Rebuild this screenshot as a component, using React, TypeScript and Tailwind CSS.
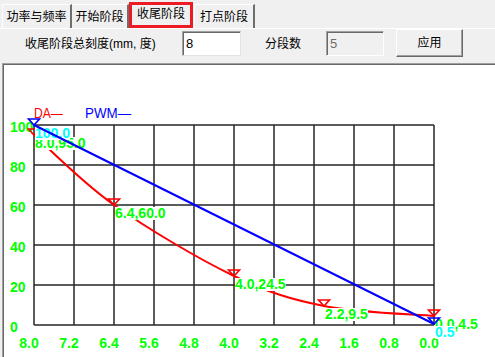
import React from "react";

const xs = [34, 74, 114, 154, 194, 234, 274, 314, 354, 394, 434];
const ys = [125, 165, 205, 245, 285, 325];
const xLabels = ["8.0", "7.2", "6.4", "5.6", "4.8", "4.0", "3.2", "2.4", "1.6", "0.8", "0.0"];
const yLabels = ["100", "80", "60", "40", "20", "0"];

const daPoints = [
  { x: 34, y: 135, t: "8.0,95.0" },
  { x: 114, y: 205, t: "6.4,60.0" },
  { x: 234, y: 276, t: "4.0,24.5" },
  { x: 324, y: 306, t: "2.2,9.5" },
  { x: 434, y: 316, t: "0.0,4.5" },
];
const pwmPoints = [
  { x: 34, y: 125, t: "100.0" },
  { x: 434, y: 324, t: "0.5" },
];

// rough width of bold 14px arial digits
function textW(s: string) {
  let w = 0;
  for (const c of s) w += c === "." || c === "," ? 3.9 : 7.8;
  return w;
}

function Tab({ label, className }: { label: string; className: string }) {
  return (
    <div className={"flex items-center justify-center text-[12px] leading-none text-black " + className}>
      {label}
    </div>
  );
}

function Chart() {
  const font = { fontFamily: "'Liberation Sans', Arial, sans-serif" };
  return (
    <svg width="492" height="293" viewBox="3 64 492 293" className="block" style={font}>
      {xs.map((x) => (
        <line key={"v" + x} x1={x} y1={125} x2={x} y2={325} stroke="#262626" strokeWidth="1.5" />
      ))}
      {ys.map((y) => (
        <line key={"h" + y} x1={34} y1={y} x2={434} y2={y} stroke="#262626" strokeWidth="1.5" />
      ))}
      {ys.map((y, i) => (
        <text key={"yl" + y} x={10} y={y + 7} fill="#00ff00" fontSize="14" fontWeight="700">
          {yLabels[i]}
        </text>
      ))}
      {xs.map((x, i) => (
        <text key={"xl" + x} x={x - 5} y={348} fill="#00ff00" fontSize="14" fontWeight="700" textAnchor="middle">
          {xLabels[i]}
        </text>
      ))}

      <text x={34} y={118} fill="#ff0000" fontSize="14" textLength="29" lengthAdjust="spacingAndGlyphs">
        DA—
      </text>
      <text x={85} y={118} fill="#0000ff" fontSize="14" textLength="46" lengthAdjust="spacingAndGlyphs">
        PWM—
      </text>

      <path
        d="M34 135 C47.3 146.7 80.7 181.5 114 205 C147.3 228.5 199 259.2 234 276 C269 292.8 290.7 299.3 324 306 C357.3 312.7 415.7 314.3 434 316"
        fill="none"
        stroke="#ff0000"
        strokeWidth="2"
      />
      {daPoints.map((p) => (
        <path
          key={"dm" + p.x}
          d={`M${p.x - 5.5} ${p.y - 6} L${p.x + 5.5} ${p.y - 6} L${p.x} ${p.y} Z`}
          fill="none"
          stroke="#ff0000"
          strokeWidth="1.6"
        />
      ))}
      {daPoints.map((p) => (
        <g key={"dl" + p.x}>
          <rect x={p.x + 1} y={p.y + 2} width={textW(p.t)} height={13} fill="#ffffff" />
          <text x={p.x + 1} y={p.y + 13} fill="#00ff00" fontSize="14" fontWeight="700">
            {p.t}
          </text>
        </g>
      ))}
      {pwmPoints.map((p) => (
        <g key={"pl" + p.x}>
          <rect x={p.x + 1} y={p.y + 2} width={textW(p.t)} height={13} fill="#ffffff" />
          <text x={p.x + 1} y={p.y + 12.5} fill="#00ffff" fontSize="14" fontWeight="700">
            {p.t}
          </text>
        </g>
      ))}

      <line x1={34} y1={125} x2={434} y2={324} stroke="#0000ff" strokeWidth="2" />
      {pwmPoints.map((p) => (
        <path
          key={"pm" + p.x}
          d={`M${p.x - 5.5} ${p.y - 6} L${p.x + 5.5} ${p.y - 6} L${p.x} ${p.y} Z`}
          fill="none"
          stroke="#0000ff"
          strokeWidth="1.6"
        />
      ))}
    </svg>
  );
}

export default function App() {
  return (
    <div className="w-[495px] h-[357px] bg-[#f0f0f0] flex flex-col overflow-hidden font-['Liberation_Sans','Noto_Sans_CJK_SC',sans-serif]">
      {/* tabs */}
      <div className="h-[29px] shrink-0 flex items-end pl-[2px] border-b border-white">
        <Tab label="功率与频率" className="w-[70px] h-[24px] border-l border-t border-white border-r-2 border-r-[#6e6e6e]" />
        <Tab label="开始阶段" className="w-[57px] h-[24px] border-t border-white border-r-2 border-r-[#6e6e6e]" />
        <Tab label="收尾阶段" className="w-[64px] h-[26px] pb-[2px] border-[3px] border-[#ed1c24] bg-[#f0f0f0]" />
        <Tab label="打点阶段" className="w-[61px] h-[24px] ml-[1px] border-l border-t border-white border-r-2 border-r-[#6e6e6e]" />
      </div>

      {/* controls */}
      <div className="h-[34px] shrink-0 flex items-start text-[12px] text-black">
        <div className="w-[182px] h-[25px] mt-[2px] pl-[25px] flex items-center">收尾阶段总刻度(mm, 度)</div>
        <div className="w-[59px] h-[25px] mt-[2px] bg-white border border-t-[#a0a0a0] border-l-[#a0a0a0] border-r-[#e3e3e3] border-b-[#e3e3e3] shadow-[inset_1px_1px_0_#696969] flex items-center pl-[3px] text-[13px]">
          8
        </div>
        <div className="w-[85px] h-[25px] mt-[2px] pl-[24px] flex items-center">分段数</div>
        <div className="w-[58px] h-[25px] mt-[2px] bg-[#f0f0f0] border border-t-[#a0a0a0] border-l-[#a0a0a0] border-r-white border-b-white shadow-[inset_1px_1px_0_#696969] flex items-center pl-[3px] text-[13px] text-[#6d6d6d]">
          5
        </div>
        <div className="w-[67px] h-[28px] ml-[12px] bg-[#f0f0f0] border border-t-white border-l-white border-r-[#696969] border-b-[#696969] shadow-[inset_-1px_-1px_0_#a0a0a0] flex items-center justify-center">
          应用
        </div>
      </div>

      {/* chart panel */}
      <div className="flex-1 ml-[2px] bg-white border-t border-l border-[#a0a0a0] shadow-[inset_1px_1px_0_#696969] overflow-hidden">
        <Chart />
      </div>
    </div>
  );
}
